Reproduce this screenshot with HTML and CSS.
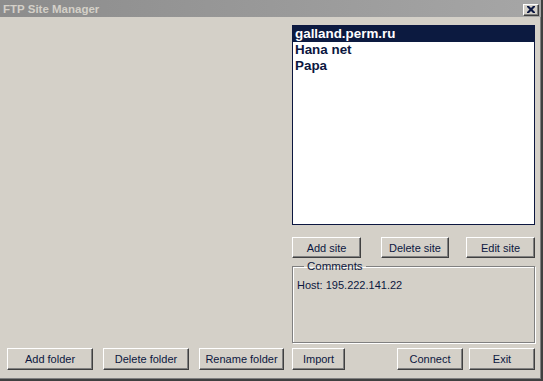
FILE: index.html
```html
<!DOCTYPE html>
<html lang="en">

<head>
  <meta charset="UTF-8">
  <title>FTP Site Manager</title>
  <link rel="stylesheet" href="styles.css">
</head>

<body>
  <div class="window">
    <div class="titlebar">
      <span class="title">FTP Site Manager</span>
      <button class="close-btn" aria-label="Close">
        <svg width="8" height="7" viewBox="0 0 8 7">
          <path d="M0 0h2l2 2 2-2h2v1l-2.5 2.5 2.5 2.5v1h-2l-2-2-2 2h-2v-1l2.5-2.5-2.5-2.5z" fill="#0c1740"/>
        </svg>
      </button>
    </div>

    <div class="content">
      <div class="sites">
        <ul class="site-list">
          <li class="selected">galland.perm.ru</li>
          <li>Hana net</li>
          <li>Papa</li>
        </ul>

        <div class="site-buttons">
          <button class="btn site-btn">Add site</button>
          <button class="btn site-btn narrow">Delete site</button>
          <button class="btn site-btn">Edit site</button>
        </div>

        <fieldset class="comments">
          <legend>Comments</legend>
          <div class="comment-text">Host: 195.222.141.22</div>
        </fieldset>
      </div>
    </div>

    <div class="bottom-bar">
      <button class="btn folder-btn">Add folder</button>
      <button class="btn folder-btn">Delete folder</button>
      <button class="btn folder-btn rename">Rename folder</button>
      <button class="btn import-btn">Import</button>
      <div class="spacer"></div>
      <button class="btn action-btn">Connect</button>
      <button class="btn action-btn">Exit</button>
    </div>
  </div>
</body>

</html>
```

FILE: styles.css
```css
body {
  margin: 0;
  padding: 0;
  background-color: #d4d0c8;
  font-family: 'Liberation Sans', Arial, sans-serif;
  font-size: 11px;
  color: #0c1740;
}

.window {
  width: 543px;
  height: 381px;
  box-sizing: border-box;
  display: flex;
  flex-direction: column;
  background-color: #d4d0c8;
  border-right: 2px solid #404040;
  border-bottom: 2px solid #404040;
  box-shadow: inset -1px -1px 0 #808080;
}

.titlebar {
  height: 17px;
  display: flex;
  align-items: center;
  justify-content: space-between;
  padding: 0 2px 0 3px;
  background: linear-gradient(to right, #8c8c8c, #a6a6a6);
}

.title {
  font-weight: bold;
  font-size: 11.5px;
  color: #d4d0c8;
}

.close-btn {
  width: 16px;
  height: 12px;
  padding: 0;
  margin-top: 2px;
  display: flex;
  align-items: center;
  justify-content: center;
  background-color: #d4d0c8;
  border: 1px solid;
  border-color: #ffffff #404040 #404040 #ffffff;
  box-shadow: inset -1px -1px 0 #808080;
}

.content {
  display: flex;
  justify-content: flex-end;
  padding: 8px 6px 0 0;
}

.sites {
  width: 243px;
  display: flex;
  flex-direction: column;
}

.site-list {
  list-style: none;
  margin: 0;
  padding: 0;
  height: 200px;
  box-sizing: border-box;
  border: 1px solid #0c1740;
  background-color: #ffffff;
  font-size: 13.4px;
  font-weight: bold;
}

.site-list li {
  height: 16px;
  line-height: 16px;
  padding-left: 2px;
}

.site-list li.selected {
  background-color: #0c1a40;
  color: #ffffff;
}

.btn {
  background-color: #d4d0c8;
  border: 1px solid;
  border-color: #ffffff #404040 #404040 #ffffff;
  box-shadow: inset -1px -1px 0 #808080;
  font-family: 'Liberation Sans', Arial, sans-serif;
  font-size: 11px;
  color: #0c1740;
  padding: 0;
  cursor: pointer;
}

.site-buttons {
  display: flex;
  justify-content: space-between;
  margin-top: 12px;
}

.site-btn {
  width: 69px;
  height: 21px;
}

.site-btn.narrow {
  width: 68px;
  margin-left: 20px;
  margin-right: 17px;
}

.comments {
  margin: 1px 0 0 0;
  padding: 5px 4px 0 4px;
  height: 84px;
  box-sizing: border-box;
  border: 1px solid #808080;
  box-shadow: inset 1px 1px 0 #ffffff, 1px 1px 0 #ffffff;
}

.comments legend {
  font-size: 11.5px;
  line-height: 14px;
  padding: 0 3px;
  margin-left: 7px;
}

.comment-text {
  font-size: 11px;
  line-height: 14px;
}

.bottom-bar {
  display: flex;
  margin-top: 5px;
  padding: 0 6px 0 7px;
}

.folder-btn {
  width: 86px;
  height: 22px;
  margin-right: 10px;
}

.folder-btn.rename {
  width: 85px;
  margin-right: 8px;
}

.import-btn {
  width: 53px;
  height: 22px;
}

.spacer {
  flex: 1;
}

.action-btn {
  width: 66px;
  height: 22px;
  margin-left: 6px;
}
```
